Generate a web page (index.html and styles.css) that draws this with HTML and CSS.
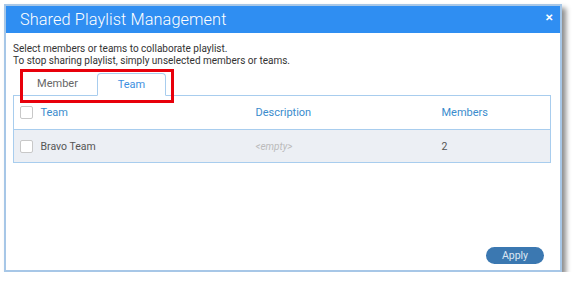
FILE: index.html
```html
<!DOCTYPE html>
<html lang="en">

<head>
    <meta charset="UTF-8">
    <meta name="viewport" content="width=device-width, initial-scale=1.0">
    <title>Shared Playlist Management</title>
    <link rel="stylesheet" href="styles.css">
</head>

<body>
    <div class="dialog">
        <div class="dialog-header">
            <span class="dialog-title">Shared Playlist Management</span>
            <span class="close">&#x2715;</span>
        </div>
        <div class="dialog-body">
            <p class="intro">Select members or teams to collaborate playlist.<br>
                To stop sharing playlist, simply unselected members or teams.</p>

            <div class="tabs">
                <div class="tab">Member</div>
                <div class="tab active">Team</div>
                <div class="highlight"></div>
            </div>

            <table class="grid">
                <thead>
                    <tr>
                        <th class="col-check"><span class="check"></span></th>
                        <th class="col-team">Team</th>
                        <th class="col-desc">Description</th>
                        <th>Members</th>
                    </tr>
                </thead>
                <tbody>
                    <tr>
                        <td class="col-check"><span class="check"></span></td>
                        <td>Bravo Team</td>
                        <td class="empty">&lt;empty&gt;</td>
                        <td>2</td>
                    </tr>
                </tbody>
            </table>
        </div>
        <div class="dialog-footer">
            <button class="btn-apply">Apply</button>
        </div>
    </div>
</body>

</html>
```

FILE: styles.css
```css
* {
    margin: 0;
    padding: 0;
    box-sizing: border-box;
}

body {
    background: #fff;
    font-family: Roboto, "Liberation Sans", sans-serif;
    padding: 4px 0 0 4px;
}

.dialog {
    width: 558px;
    height: 268px;
    border: 2px solid #a7c7e7;
    background: #fff;
    box-shadow: 4px 4px 5px rgba(0, 0, 0, .45);
    display: flex;
    flex-direction: column;
}

.dialog-header {
    height: 27px;
    background-color: #2f8ef2;
    display: flex;
    align-items: center;
    justify-content: space-between;
    padding: 0 7px 0 14px;
}

.dialog-title {
    color: #fff;
    font-size: 16.3px;
    font-weight: 300;
    letter-spacing: .1px;
}

.close {
    color: #fff;
    font-size: 10px;
    font-weight: bold;
    margin-top: -5px;
}

.dialog-body {
    padding: 10px 9px 0 7px;
}

.intro {
    font-size: 10px;
    line-height: 12px;
    color: #333;
}

.tabs {
    position: relative;
    display: flex;
    margin-top: 6px;
    padding-left: 9px;
    height: 22px;
}

.tab {
    width: 75px;
    text-align: center;
    font-size: 11px;
    line-height: 20px;
    color: #666;
    padding-top: 1px;
    padding-right: 4px;
}

.tab.active {
    width: 69px;
    padding-right: 0;
    color: #3d8fe0;
    border: 1px solid #a8cdee;
    border-bottom: 1px solid #fff;
    border-radius: 4px 4px 0 0;
    background: #fff;
    margin-bottom: -1px;
    position: relative;
    z-index: 1;
}

.highlight {
    position: absolute;
    left: 7px;
    top: -4px;
    width: 154px;
    height: 34px;
    border: 3px solid #e8000b;
    z-index: 2;
}

.grid {
    width: 538px;
    border-collapse: collapse;
    border: 1px solid #a8cdee;
    font-size: 10.5px;
}

.grid th {
    height: 34px;
    text-align: left;
    font-weight: normal;
    color: #3a8ccd;
    font-size: 11px;
    border-bottom: 1px solid #a8cdee;
}

.grid td {
    height: 33px;
    background: #eceff4;
    color: #555;
}

.col-check {
    width: 27px;
    padding-left: 6px;
}

.col-team {
    width: 215px;
}

.col-desc {
    width: 186px;
}

.grid .empty {
    color: #bbb;
    font-style: italic;
    font-size: 10px;
}

.check {
    display: block;
    width: 13px;
    height: 13px;
    border: 1px solid #c8c8c8;
    border-radius: 2px;
    background: #fff;
}

.dialog-footer {
    margin-top: auto;
    display: flex;
    justify-content: flex-end;
    padding: 0 16px 6px 0;
}

.btn-apply {
    width: 58px;
    height: 17px;
    border: none;
    border-radius: 9px;
    background-color: #3b78b1;
    color: #dbe7f3;
    font-family: Roboto, "Liberation Sans", sans-serif;
    font-size: 10.5px;
}
```
